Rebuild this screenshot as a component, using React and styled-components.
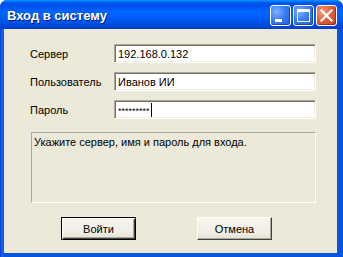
import React from "react";
import styled, { createGlobalStyle } from "styled-components";

const Global = createGlobalStyle`
  html, body {
    margin: 0;
    padding: 0;
    background: #ffffff;
  }
  body {
    font-family: "Liberation Sans", Arial, sans-serif;
    font-size: 11px;
    color: #000;
  }
`;

const Window = styled.div`
  width: 343px;
  height: 257px;
  display: flex;
  flex-direction: column;
  box-sizing: border-box;
  background: #0055ea;
  border-radius: 7px 7px 0 0;
  overflow: hidden;
`;

const TitleBar = styled.div`
  height: 29px;
  flex: none;
  display: flex;
  align-items: center;
  padding: 0 6px 0 7px;
  box-sizing: border-box;
  background: linear-gradient(
    to bottom,
    #0997ff 0px,
    #0053ee 3px,
    #0050ee 6px,
    #0066ff 12px,
    #0058f5 20px,
    #0049d8 26px,
    #003dd0 29px
  );
`;

const Title = styled.div`
  flex: 1;
  color: #fff;
  font-family: "Liberation Sans", Arial, sans-serif;
  font-weight: bold;
  font-size: 13px;
  text-shadow: 1px 1px 0 #0a1e80;
  padding-top: 1px;
`;

const Controls = styled.div`
  display: flex;
  gap: 2px;
  margin-top: 2px;
`;

const CtlButton = styled.div`
  width: 21px;
  height: 21px;
  box-sizing: border-box;
  border: 1px solid #ffffff;
  border-radius: 3px;
  display: flex;
  align-items: center;
  justify-content: center;
  background: ${(p) =>
    p.$close
      ? "radial-gradient(circle at 30% 30%, #f0a080 0%, #e2613a 45%, #c8401c 100%)"
      : "radial-gradient(circle at 30% 30%, #7fb0ff 0%, #3a7df5 45%, #1f5ede 100%)"};
  box-shadow: inset -1px -1px 0 rgba(0, 0, 80, 0.35);
`;

const Frame = styled.div`
  flex: 1;
  display: flex;
  padding: 0 6px 4px 4px;
  background: linear-gradient(to right, #0831d9 0, #166aee 2px, #0855dd 4px);
`;

const Body = styled.div`
  flex: 1;
  background: #ece9d8;
  display: flex;
  flex-direction: column;
  padding: 15px 0 0 26px;
`;

const Form = styled.div`
  display: grid;
  grid-template-columns: 84px 202px;
  row-gap: 9px;
  align-items: center;
`;

const Label = styled.div`
  font-size: 11px;
`;

const Field = styled.div`
  height: 19px;
  box-sizing: border-box;
  background: #fff;
  border-top: 1px solid #aca899;
  border-left: 1px solid #aca899;
  border-right: 1px solid #ffffff;
  border-bottom: 1px solid #ffffff;
  box-shadow: inset 1px 1px 0 #716f64, inset -1px -1px 0 #f1efe2;
  padding: 1px 3px 0 3px;
  display: flex;
  align-items: center;
  font-size: 11px;
  white-space: nowrap;
`;

const Stars = styled.span`
  font-size: 9px;
  letter-spacing: 0;
  line-height: 1;
  margin-top: 2px;
`;

const Caret = styled.span`
  display: inline-block;
  width: 1px;
  height: 14px;
  background: #000;
  margin-left: 1px;
`;

const Info = styled.div`
  margin: 13px 0 0 1px;
  width: 285px;
  height: 71px;
  box-sizing: border-box;
  border-top: 1px solid #aca899;
  border-left: 1px solid #aca899;
  border-right: 1px solid #ffffff;
  border-bottom: 1px solid #ffffff;
  padding: 3px 2px;
  font-size: 11px;
`;

const Buttons = styled.div`
  display: flex;
  gap: 61px;
  margin: 14px 0 0 31px;
`;

const Button = styled.div`
  width: 75px;
  height: 23px;
  box-sizing: border-box;
  display: flex;
  align-items: center;
  justify-content: center;
  font-size: 11px;
  background: linear-gradient(to bottom, #f6f5ee 0%, #efede4 70%, #e4e1d4 100%);
  border-top: 1px solid ${(p) => (p.$default ? "#000" : "#ffffff")};
  border-left: 1px solid ${(p) => (p.$default ? "#000" : "#ffffff")};
  border-right: 1px solid ${(p) => (p.$default ? "#000" : "#404040")};
  border-bottom: 1px solid ${(p) => (p.$default ? "#000" : "#404040")};
  box-shadow: ${(p) =>
    p.$default
      ? "inset 1px 1px 0 #ffffff, inset -1px -1px 0 #404040, inset -2px -2px 0 #aca899"
      : "inset -1px -1px 0 #aca899"};
`;

function MinIcon() {
  return (
    <svg width="19" height="19" viewBox="0 0 19 19">
      <rect x="4" y="13" width="7" height="3" fill="#fff" />
    </svg>
  );
}

function MaxIcon() {
  return (
    <svg width="19" height="19" viewBox="0 0 19 19">
      <rect x="3.5" y="3.5" width="12" height="12" fill="none" stroke="#fff" strokeWidth="1" />
      <rect x="3" y="3" width="13" height="3" fill="#fff" />
    </svg>
  );
}

function CloseIcon() {
  return (
    <svg width="19" height="19" viewBox="0 0 19 19">
      <path d="M4.5 4.5 L14.5 14.5 M14.5 4.5 L4.5 14.5" stroke="#fff" strokeWidth="2.2" strokeLinecap="square" />
    </svg>
  );
}

export default function App() {
  return (
    <>
      <Global />
      <Window>
        <TitleBar>
          <Title>Вход в систему</Title>
          <Controls>
            <CtlButton>
              <MinIcon />
            </CtlButton>
            <CtlButton>
              <MaxIcon />
            </CtlButton>
            <CtlButton $close>
              <CloseIcon />
            </CtlButton>
          </Controls>
        </TitleBar>
        <Frame>
          <Body>
            <Form>
              <Label>Сервер</Label>
              <Field>192.168.0.132</Field>
              <Label>Пользователь</Label>
              <Field>Иванов ИИ</Field>
              <Label>Пароль</Label>
              <Field>
                <Stars>*********</Stars>
                <Caret />
              </Field>
            </Form>
            <Info>Укажите сервер, имя и пароль для входа.</Info>
            <Buttons>
              <Button $default>Войти</Button>
              <Button>Отмена</Button>
            </Buttons>
          </Body>
        </Frame>
      </Window>
    </>
  );
}
